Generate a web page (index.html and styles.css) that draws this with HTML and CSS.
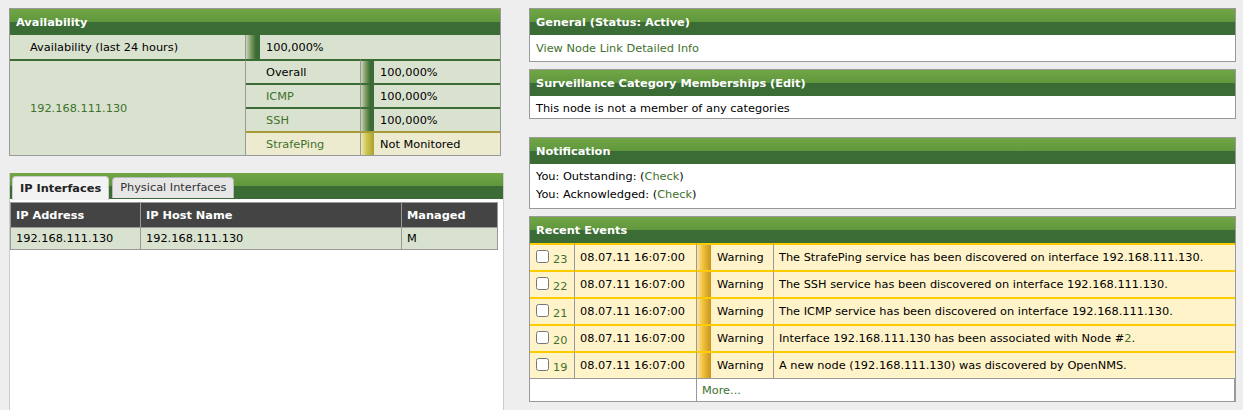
FILE: index.html
```html
<!DOCTYPE html>
<html lang="en">
<head>
    <meta charset="UTF-8">
    <title>Node: 192.168.111.130</title>
    <link rel="stylesheet" href="styles.css">
</head>
<body>
<div class="page">
    <div class="col-left">
        <div class="panel avail-panel">
            <h3 class="panel-head">Availability</h3>
            <table class="avail">
                <colgroup>
                    <col class="c-node">
                    <col class="c-svc">
                    <col class="c-bar">
                    <col>
                </colgroup>
                <tr class="avail-total">
                    <td class="node-label">Availability (last 24 hours)</td>
                    <td colspan="3" class="total">
                        <div class="total-cell"><span class="total-bar"></span><span class="pct">100,000%</span></div>
                    </td>
                </tr>
                <tr>
                    <td rowspan="4" class="node"><a href="#">192.168.111.130</a></td>
                    <td class="svc">Overall</td>
                    <td class="bar"></td>
                    <td class="pct">100,000%</td>
                </tr>
                <tr>
                    <td class="svc"><a href="#">ICMP</a></td>
                    <td class="bar"></td>
                    <td class="pct">100,000%</td>
                </tr>
                <tr>
                    <td class="svc"><a href="#">SSH</a></td>
                    <td class="bar"></td>
                    <td class="pct">100,000%</td>
                </tr>
                <tr class="indeterminate">
                    <td class="svc"><a href="#">StrafePing</a></td>
                    <td class="bar"></td>
                    <td class="pct">Not Monitored</td>
                </tr>
            </table>
        </div>

        <div class="tabs">
            <ul class="tab-nav">
                <li class="tab active">IP Interfaces</li>
                <li class="tab">Physical Interfaces</li>
            </ul>
            <div class="tab-body">
                <table class="iface">
                    <colgroup>
                        <col class="c-addr">
                        <col class="c-host">
                        <col class="c-managed">
                    </colgroup>
                    <tr>
                        <th>IP Address</th>
                        <th>IP Host Name</th>
                        <th>Managed</th>
                    </tr>
                    <tr>
                        <td>192.168.111.130</td>
                        <td>192.168.111.130</td>
                        <td>M</td>
                    </tr>
                </table>
            </div>
        </div>
    </div>

    <div class="col-right">
        <div class="panel">
            <h3 class="panel-head">General (Status: Active)</h3>
            <div class="panel-body general"><a href="#">View Node Link Detailed Info</a></div>
        </div>

        <div class="panel">
            <h3 class="panel-head">Surveillance Category Memberships (Edit)</h3>
            <div class="panel-body slim">This node is not a member of any categories</div>
        </div>

        <div class="panel notify">
            <h3 class="panel-head">Notification</h3>
            <div class="panel-body lines">
                <div>You: Outstanding: (<a href="#">Check</a>)</div>
                <div>You: Acknowledged: (<a href="#">Check</a>)</div>
            </div>
        </div>

        <div class="panel">
            <h3 class="panel-head">Recent Events</h3>
            <table class="events">
                <colgroup>
                    <col class="c-id">
                    <col class="c-time">
                    <col class="c-sev-bar">
                    <col class="c-sev">
                    <col>
                </colgroup>
                <tr>
                    <td class="id"><input type="checkbox"><a href="#">23</a></td>
                    <td>08.07.11 16:07:00</td>
                    <td class="sev-bar"></td>
                    <td class="sev">Warning</td>
                    <td>The StrafePing service has been discovered on interface 192.168.111.130.</td>
                </tr>
                <tr>
                    <td class="id"><input type="checkbox"><a href="#">22</a></td>
                    <td>08.07.11 16:07:00</td>
                    <td class="sev-bar"></td>
                    <td class="sev">Warning</td>
                    <td>The SSH service has been discovered on interface 192.168.111.130.</td>
                </tr>
                <tr>
                    <td class="id"><input type="checkbox"><a href="#">21</a></td>
                    <td>08.07.11 16:07:00</td>
                    <td class="sev-bar"></td>
                    <td class="sev">Warning</td>
                    <td>The ICMP service has been discovered on interface 192.168.111.130.</td>
                </tr>
                <tr>
                    <td class="id"><input type="checkbox"><a href="#">20</a></td>
                    <td>08.07.11 16:07:00</td>
                    <td class="sev-bar"></td>
                    <td class="sev">Warning</td>
                    <td>Interface 192.168.111.130 has been associated with Node #<a href="#">2</a>.</td>
                </tr>
                <tr>
                    <td class="id"><input type="checkbox"><a href="#">19</a></td>
                    <td>08.07.11 16:07:00</td>
                    <td class="sev-bar"></td>
                    <td class="sev">Warning</td>
                    <td>A new node (192.168.111.130) was discovered by OpenNMS.</td>
                </tr>
                <tr class="more">
                    <td colspan="2" class="more-blank"></td>
                    <td colspan="3"><a href="#">More...</a></td>
                </tr>
            </table>
        </div>
    </div>
</div>
</body>
</html>
```

FILE: styles.css
```css
body {
    margin: 0;
    padding: 8px 7px 0 9px;
    background-color: #eeeeee;
    font-family: "DejaVu Sans", Verdana, sans-serif;
    font-size: 8.5pt;
    color: #000000;
}
a {
    color: #3f712d;
    text-decoration: none;
}
.page {
    display: flex;
    align-items: flex-start;
    gap: 25px;
}
.col-left {
    width: 495px;
}
.col-right {
    width: 707px;
}

/* boxes */
.panel {
    border: 1px solid #999999;
    background-color: #ffffff;
    margin-bottom: 7px;
}
.panel-head {
    margin: 0;
    height: 26px;
    line-height: 27px;
    padding: 0 6px;
    font-size: 8.5pt;
    font-weight: bold;
    color: #ffffff;
    background: linear-gradient(#72a646, #5f973c 50%, #3b6c35 50%, #3b6c35);
}
.panel-body {
    padding: 5px 6px;
    line-height: 16px;
}
.panel-body.slim {
    padding: 4px 6px 2px;
}
.panel-body.lines {
    padding: 3px 6px 5px;
    line-height: 18px;
}
.notify {
    margin-top: 18px;
}

/* availability */
.avail-panel {
    width: 490px;
    margin-bottom: 17px;
}
.avail {
    width: 100%;
    border-spacing: 0;
    table-layout: fixed;
}
.avail .c-node {
    width: 236px;
}
.avail .c-svc {
    width: 115px;
}
.avail .c-bar {
    width: 13px;
}
.avail td {
    padding: 0;
    line-height: 22px;
    background-color: #d9e2cf;
    border-top: 2px solid #3b6c35;
    box-sizing: border-box;
    white-space: nowrap;
}
.avail .avail-total td {
    border-top: none;
    line-height: 24px;
}
.avail .node-label,
.avail .node {
    padding-left: 20px;
    border-right: 1px solid #999999;
}
.avail .svc {
    padding-left: 20px;
    border-right: 1px solid #999999;
}
.avail .pct {
    padding-left: 6px;
}
.avail .bar,
.total-bar {
    background: linear-gradient(to right, #cbd6ba, #7f9d66 35%, #3c6c35 70%);
}
.total-cell {
    display: flex;
    height: 24px;
}
.total-bar {
    width: 14px;
}
.avail .indeterminate td {
    border-top-color: #a99b37;
    background-color: #edebcf;
}
.avail .indeterminate .bar {
    background: linear-gradient(to right, #ecebb2, #d0c658 40%, #aaa02a);
}

/* interface tabs */
.tabs {
    border: 1px solid #cccccc;
    border-top: none;
    background-color: #ffffff;
    height: 240px;
}
.tab-nav {
    display: flex;
    align-items: flex-end;
    gap: 3px;
    height: 26px;
    margin: 0;
    padding: 0 0 0 2px;
    list-style: none;
    background: linear-gradient(#72a646, #5f973c 50%, #3b6c35 50%, #3b6c35);
}
.tab {
    height: 20px;
    line-height: 19px;
    padding: 0 7px;
    margin-bottom: 1px;
    border: 1px solid #b9b9b9;
    border-bottom: none;
    border-radius: 4px 4px 0 0;
    background-color: #e6e6e6;
    color: #333333;
}
.tab.active {
    height: 23px;
    line-height: 22px;
    padding: 0 7px;
    margin-bottom: -1px;
    border-color: #cccccc;
    background-color: #f3f3f3;
    color: #222222;
    font-weight: bold;
}
.tab-body {
    padding-top: 3px;
}
.iface {
    width: 488px;
    border-collapse: collapse;
    table-layout: fixed;
}
.iface .c-addr {
    width: 130px;
}
.iface .c-host {
    width: 261px;
}
.iface th,
.iface td {
    border: 1px solid #999999;
    padding: 0 5px;
    text-align: left;
    white-space: nowrap;
}
.iface th {
    line-height: 24px;
    background-color: #444444;
    color: #ffffff;
}
.iface td {
    line-height: 21px;
    background-color: #d9e2cf;
}

/* events */
.events {
    width: 100%;
    border-spacing: 0;
    table-layout: fixed;
}
.events .c-id {
    width: 45px;
}
.events .c-time {
    width: 122px;
}
.events .c-sev-bar {
    width: 14px;
}
.events .c-sev {
    width: 63px;
}
.events td {
    padding: 0 5px;
    line-height: 25px;
    background-color: #fff3c9;
    border-top: 2px solid #ffcc00;
    box-sizing: border-box;
    white-space: nowrap;
}
.events td:nth-child(1),
.events td:nth-child(2),
.events td:nth-child(4) {
    border-right: 1px solid #999999;
}
.events .sev {
    padding-left: 6px;
}
.events .sev-bar {
    padding: 0;
    background: linear-gradient(to right, #fde6a6, #f2c443 40%, #c99419);
}
.events .id {
    line-height: 19px;
}
.events .id input {
    width: 13px;
    height: 13px;
    margin: 0 4px 0 1px;
    vertical-align: -3px;
}
.events .id a {
    vertical-align: -3px;
}
.events .more td {
    line-height: 22px;
    background-color: #ffffff;
    border-top: 1px solid #999999;
}
.events .more .more-blank {
    border-right: 1px solid #999999;
}
```
